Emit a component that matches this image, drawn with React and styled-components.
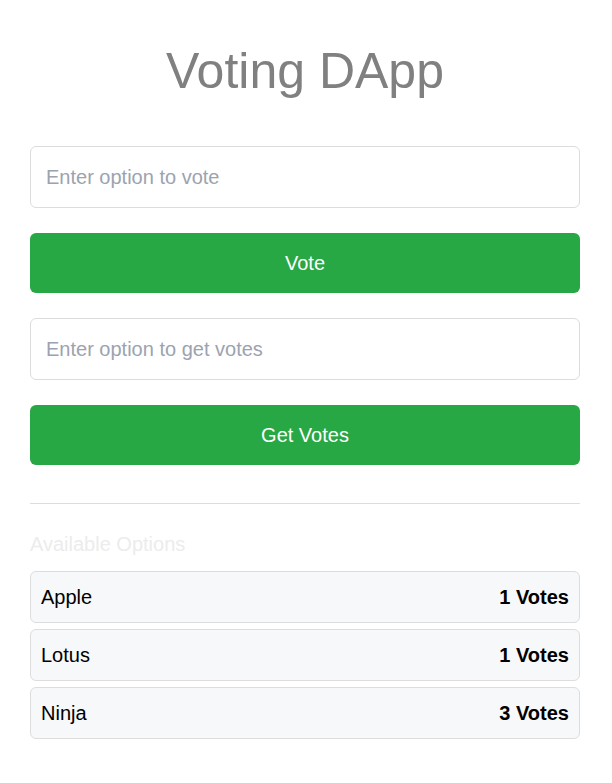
import React, { useState } from 'react';
import styled, { createGlobalStyle } from 'styled-components';

const GlobalStyle = createGlobalStyle`
  html, body {
    margin: 0;
    padding: 0;
    background: #ffffff;
  }
  * {
    box-sizing: border-box;
  }
`;

const Card = styled.div`
  font-family: "Liberation Sans", Arial, sans-serif;
  background: #fff;
  padding: 43px 32px 43px 30px;
  min-height: 783px;
  border-radius: 0 0 10px 10px;
`;

const Title = styled.h1`
  margin: 0 0 47px;
  text-align: center;
  font-size: 50px;
  font-weight: normal;
  line-height: 56px;
  color: #808080;
`;

const Input = styled.input`
  display: block;
  width: 100%;
  height: 62px;
  margin: 0 0 25px;
  padding: 0 15px;
  font-family: inherit;
  font-size: 20px;
  color: #333;
  border: 1px solid #dcdcdc;
  border-radius: 6px;
  outline: none;

  &::placeholder {
    color: #9ca3af;
  }
`;

const Button = styled.button`
  display: block;
  width: 100%;
  height: 60px;
  margin: 0 0 25px;
  font-family: inherit;
  font-size: 20px;
  color: #fff;
  background-color: #28a745;
  border: none;
  border-radius: 6px;
  cursor: pointer;
`;

const Divider = styled.hr`
  border: none;
  border-top: 1px solid #dddddd;
  margin: 38px 0 29px;
`;

const SectionTitle = styled.h2`
  margin: 0 0 15px;
  font-size: 20px;
  font-weight: normal;
  line-height: 23px;
  color: #ececec;
`;

const List = styled.ul`
  margin: 0;
  padding: 0;
  display: flex;
  flex-direction: column;
  gap: 6px;
`;

const Row = styled.li`
  list-style: none;
  height: 52px;
  display: flex;
  justify-content: space-between;
  align-items: center;
  padding: 0 10px 0 10px;
  background: #f7f8f9;
  border: 1px solid #dddddd;
  border-radius: 6px;
  font-size: 20px;
  color: #000;
`;

const Count = styled.strong`
  font-weight: bold;
`;

const options = [
  { name: 'Apple', votes: 1 },
  { name: 'Lotus', votes: 1 },
  { name: 'Ninja', votes: 3 },
];

const App = () => {
  const [voteOption, setVoteOption] = useState('');
  const [queryOption, setQueryOption] = useState('');

  return (
    <>
      <GlobalStyle />
      <Card>
        <Title>Voting DApp</Title>
        <Input
          placeholder="Enter option to vote"
          value={voteOption}
          onChange={(e) => setVoteOption(e.target.value)}
        />
        <Button>Vote</Button>
        <Input
          placeholder="Enter option to get votes"
          value={queryOption}
          onChange={(e) => setQueryOption(e.target.value)}
        />
        <Button>Get Votes</Button>
        <Divider />
        <SectionTitle>Available Options</SectionTitle>
        <List>
          {options.map((opt, i) => (
            <Row key={i}>
              <span>{opt.name}</span>
              <Count>{opt.votes} Votes</Count>
            </Row>
          ))}
        </List>
      </Card>
    </>
  );
};

export default App;
